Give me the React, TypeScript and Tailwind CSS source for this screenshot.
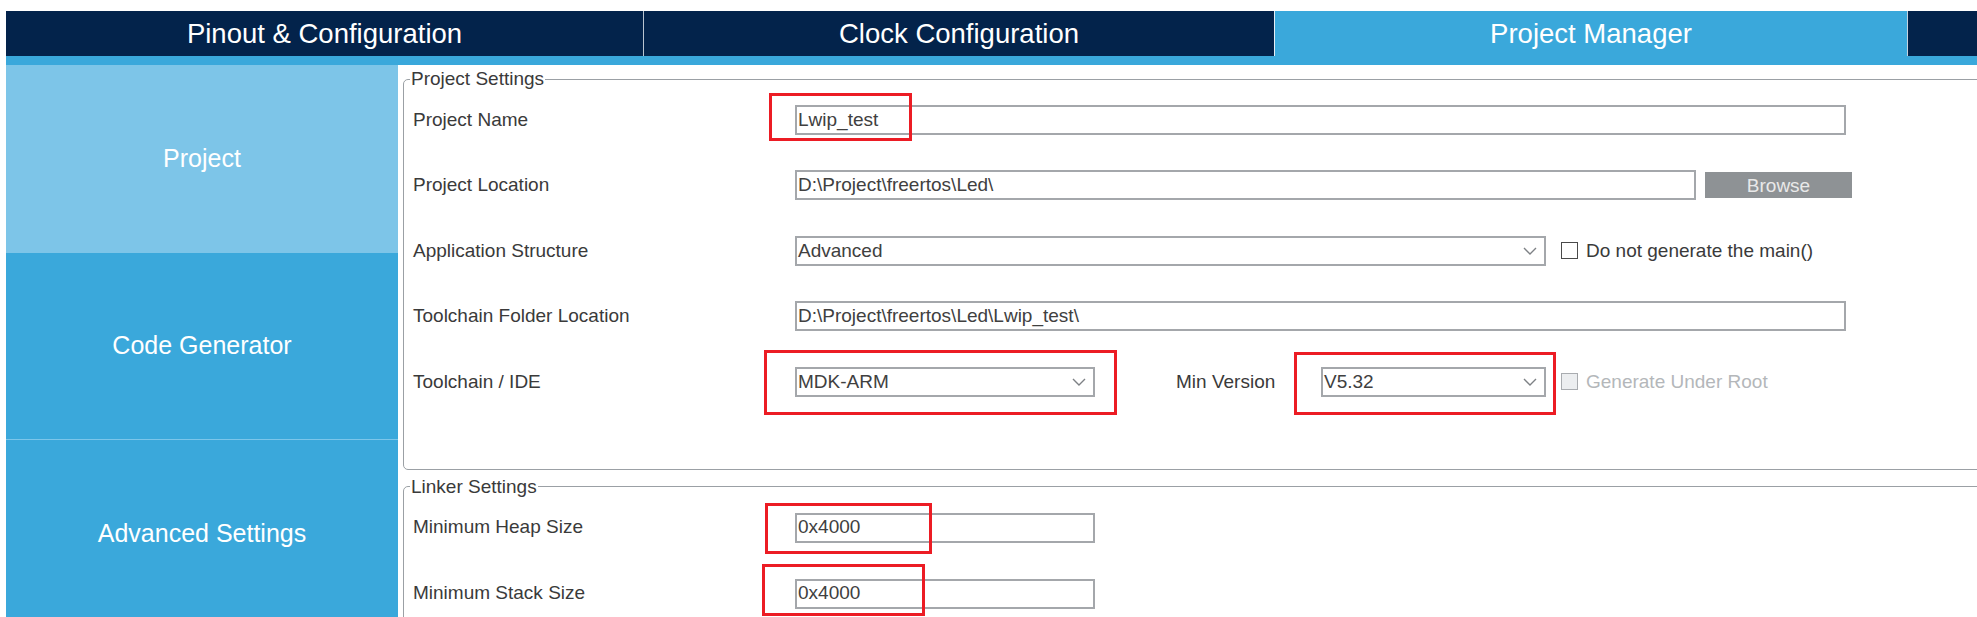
import type { ReactNode } from "react";

const Chevron = () => (
  <svg width="14" height="8" viewBox="0 0 14 8" className="shrink-0">
    <path d="M1 1 L7 7 L13 1" fill="none" stroke="#7d8185" strokeWidth="1.4" />
  </svg>
);

const RedMark = ({ className }: { className: string }) => (
  <span className={`pointer-events-none absolute border-[3px] border-[#ec1c24] ${className}`} />
);

const TextBox = ({ value, className = "" }: { value?: string; className?: string }) => (
  <div className={`flex h-[30px] items-center border-2 border-[#a4a7ab] bg-white pl-[1px] text-[19px] text-[#404040] ${className}`}>
    {value}
  </div>
);

const Select = ({ value, className = "" }: { value: string; className?: string }) => (
  <div className={`flex h-[30px] items-center justify-between border-2 border-[#a4a7ab] bg-white pl-[1px] pr-[7px] text-[19px] text-[#404040] ${className}`}>
    <span>{value}</span>
    <Chevron />
  </div>
);

const CheckBox = ({ label, disabled }: { label: string; disabled?: boolean }) => (
  <div className="ml-[15px] flex items-center gap-[8px] text-[19px]">
    <span
      className={
        disabled
          ? "h-[17px] w-[17px] border-[1.5px] border-[#a9acb0] bg-[#eceef0]"
          : "h-[17px] w-[17px] border-[1.5px] border-[#4a4a4a] bg-white"
      }
    />
    <span className={disabled ? "text-[#b4b7ba]" : "text-[#3a3a3a]"}>{label}</span>
  </div>
);

const Row = ({ label, h = "h-[65.5px]", children }: { label: string; h?: string; children: ReactNode }) => (
  <div className={`flex items-center pl-[9px] ${h}`}>
    <div className="w-[382px] shrink-0 text-[19px] text-[#3a3a3a]">{label}</div>
    {children}
  </div>
);

export default function App() {
  return (
    <div className="h-[617px] w-[1977px] overflow-hidden bg-white pl-[6px] pt-[11px] font-['Liberation_Sans',Arial,sans-serif]">
      {/* top tabs */}
      <div className="flex h-[45px] text-[27.5px] text-white">
        <div className="flex w-[638px] items-center justify-center border-r border-[#b9c4d0] bg-[#03234b]">
          Pinout &amp; Configuration
        </div>
        <div className="flex w-[631px] items-center justify-center border-r border-[#e6eef5] bg-[#03234b]">
          Clock Configuration
        </div>
        <div className="flex w-[633px] items-center justify-center border-r border-[#c7d3de] bg-[#3aa8db]">
          Project Manager
        </div>
        <div className="flex-1 bg-[#03234b]" />
      </div>
      <div className="h-[9px] bg-[#3aa8db]" />

      <div className="flex h-[552px]">
        {/* side menu */}
        <div className="flex w-[392px] shrink-0 flex-col text-[25px] text-white">
          <div className="flex h-[188px] shrink-0 items-center justify-center bg-[#7dc5e8]">Project</div>
          <div className="flex h-[187px] shrink-0 items-center justify-center border-b border-[#7cc6ea] bg-[#3aa8db]">
            Code Generator
          </div>
          <div className="flex h-[188px] shrink-0 items-center justify-center bg-[#3aa8db]">Advanced Settings</div>
        </div>

        {/* settings */}
        <div className="min-w-0 flex-1 overflow-hidden pl-[5px]">
          <fieldset className="-mr-[20px] mt-[6px] rounded-[5px] border border-[#9ba0a5] pb-[54px]">
            <legend className="ml-[6px] px-[1px] text-[19px] leading-[16px] text-[#3a3a3a]">Project Settings</legend>
            <Row label="Project Name">
              <div className="relative">
                <TextBox value="Lwip_test" className="w-[1051px]" />
                <RedMark className="-left-[26px] -top-[12px] h-[48px] w-[143px]" />
              </div>
            </Row>
            <Row label="Project Location">
              <TextBox value="D:\Project\freertos\Led\" className="w-[901px]" />
              <button className="ml-[9px] h-[26px] w-[147px] bg-[#8e9295] text-[19px] text-[#e9e9e9]">Browse</button>
            </Row>
            <Row label="Application Structure">
              <Select value="Advanced" className="w-[751px]" />
              <CheckBox label="Do not generate the main()" />
            </Row>
            <Row label="Toolchain Folder Location">
              <TextBox value="D:\Project\freertos\Led\Lwip_test\" className="w-[1051px]" />
            </Row>
            <Row label="Toolchain / IDE">
              <div className="relative">
                <Select value="MDK-ARM" className="w-[300px]" />
                <RedMark className="-left-[31px] -top-[17px] h-[65px] w-[353px]" />
              </div>
              <div className="ml-[81px] w-[145px] text-[19px] text-[#3a3a3a]">Min Version</div>
              <div className="relative">
                <Select value="V5.32" className="w-[225px]" />
                <RedMark className="-left-[27px] -top-[15px] h-[63px] w-[262px]" />
              </div>
              <CheckBox label="Generate Under Root" disabled />
            </Row>
          </fieldset>

          <fieldset className="-mr-[20px] mt-[9px] rounded-[5px] border border-[#9ba0a5] pb-[40px]">
            <legend className="ml-[6px] px-[1px] text-[19px] leading-[16px] text-[#3a3a3a]">Linker Settings</legend>
            <Row label="Minimum Heap Size" h="h-[66px]">
              <div className="relative">
                <TextBox value="0x4000" className="w-[300px]" />
                <RedMark className="-left-[30px] -top-[10px] h-[51px] w-[167px]" />
              </div>
            </Row>
            <Row label="Minimum Stack Size" h="h-[66px]">
              <div className="relative">
                <TextBox value="0x4000" className="w-[300px]" />
                <RedMark className="-left-[33px] -top-[15px] h-[52px] w-[163px]" />
              </div>
            </Row>
          </fieldset>
        </div>
      </div>
    </div>
  );
}
